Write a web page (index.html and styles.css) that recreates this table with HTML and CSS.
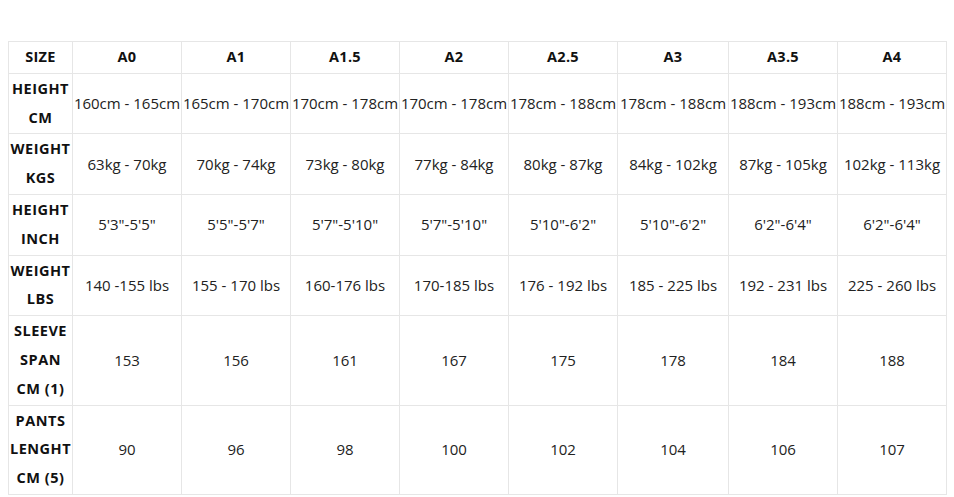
FILE: index.html
```html
<!DOCTYPE html>
<html>
<head>
<meta charset="utf-8">
<link rel="stylesheet" href="styles.css">
</head>
<body>
<table class="size-table">
  <colgroup>
    <col class="c-label">
    <col class="c-std"><col class="c-std"><col class="c-std"><col class="c-std"><col class="c-std">
    <col class="c-wide"><col class="c-std"><col class="c-std">
  </colgroup>
  <tr class="head">
    <th>SIZE</th><th>A0</th><th>A1</th><th>A1.5</th><th>A2</th><th>A2.5</th><th>A3</th><th>A3.5</th><th>A4</th>
  </tr>
  <tr>
    <th>HEIGHT<br>CM</th>
    <td>160cm - 165cm</td><td>165cm - 170cm</td><td>170cm - 178cm</td><td>170cm - 178cm</td><td>178cm - 188cm</td><td>178cm - 188cm</td><td>188cm - 193cm</td><td>188cm - 193cm</td>
  </tr>
  <tr>
    <th>WEIGHT<br>KGS</th>
    <td>63kg - 70kg</td><td>70kg - 74kg</td><td>73kg - 80kg</td><td>77kg - 84kg</td><td>80kg - 87kg</td><td>84kg - 102kg</td><td>87kg - 105kg</td><td>102kg - 113kg</td>
  </tr>
  <tr>
    <th>HEIGHT<br>INCH</th>
    <td>5'3"-5'5"</td><td>5'5"-5'7"</td><td>5'7"-5'10"</td><td>5'7"-5'10"</td><td>5'10"-6'2"</td><td>5'10"-6'2"</td><td>6'2"-6'4"</td><td>6'2"-6'4"</td>
  </tr>
  <tr>
    <th>WEIGHT<br>LBS</th>
    <td>140 -155 lbs</td><td>155 - 170 lbs</td><td>160-176 lbs</td><td>170-185 lbs</td><td>176 - 192 lbs</td><td>185 - 225 lbs</td><td>192 - 231 lbs</td><td>225 - 260 lbs</td>
  </tr>
  <tr>
    <th>SLEEVE<br>SPAN<br>CM (1)</th>
    <td>153</td><td>156</td><td>161</td><td>167</td><td>175</td><td>178</td><td>184</td><td>188</td>
  </tr>
  <tr>
    <th>PANTS<br>LENGHT<br>CM (5)</th>
    <td>90</td><td>96</td><td>98</td><td>100</td><td>102</td><td>104</td><td>106</td><td>107</td>
  </tr>
</table>
</body>
</html>
```

FILE: styles.css
```css
html, body {
  margin: 0;
  padding: 0;
  background: #ffffff;
}

body {
  padding: 41px 8px 0 8px;
  font-family: "Open Sans", "Noto Sans", sans-serif;
}

.size-table {
  border-collapse: collapse;
  table-layout: fixed;
  width: 938px;
}

.c-label { width: 64px; }
.c-std { width: 109px; }
.c-wide { width: 111px; }

.size-table th,
.size-table td {
  border: 1px solid #e6e6e6;
  padding: 1px 0;
  line-height: 28.8px;
  text-align: center;
  vertical-align: middle;
  white-space: nowrap;
  overflow: hidden;
}

.size-table th {
  font-size: 14.5px;
  font-weight: 700;
  color: #111111;
  letter-spacing: 0.5px;
}

.size-table .head th {
  letter-spacing: 0.3px;
}

.size-table td {
  font-size: 15px;
  font-weight: 400;
  color: #222222;
}
```
